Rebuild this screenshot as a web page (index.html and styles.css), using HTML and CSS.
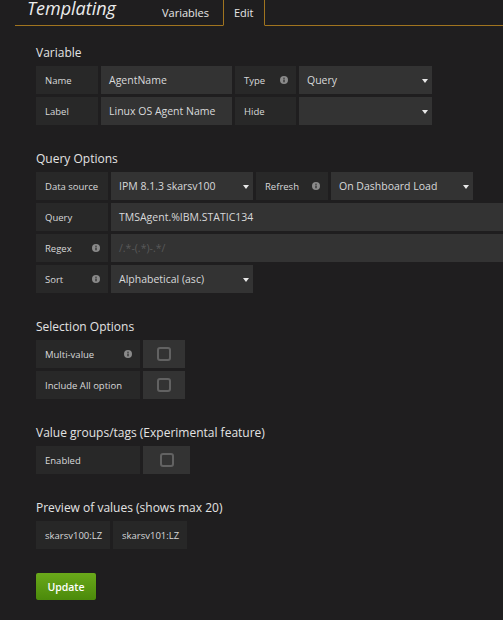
FILE: index.html
```html
<!DOCTYPE html>
<html lang="en">
<head>
<meta charset="UTF-8">
<meta name="viewport" content="width=device-width, initial-scale=1.0">
<title>Templating - Edit</title>
<link rel="stylesheet" href="styles.css">
</head>
<body>

<div class="page-header">
    <h1 class="page-title">Templating</h1>
    <a class="tab">Variables</a>
    <a class="tab active">Edit</a>
    <div class="tab-filler"></div>
</div>

<div class="content">

    <div class="section">
        <h5 class="section-heading">Variable</h5>
        <div class="form-row">
            <span class="form-label w-62">Name</span>
            <span class="form-input w-131">AgentName</span>
            <span class="form-label w-61">Type
                <svg class="info" viewBox="0 0 8 8"><circle cx="4" cy="4" r="4"/><rect x="3.4" y="3.5" width="1.2" height="2.8"/><circle cx="4" cy="2.2" r="0.7"/></svg>
            </span>
            <span class="form-input form-select w-133">Query <span class="caret"></span></span>
        </div>
        <div class="form-row">
            <span class="form-label w-62">Label</span>
            <span class="form-input w-131">Linux OS Agent Name</span>
            <span class="form-label w-61">Hide</span>
            <span class="form-input form-select w-133"><span class="caret"></span></span>
        </div>
    </div>

    <div class="section">
        <h5 class="section-heading">Query Options</h5>
        <div class="form-row">
            <span class="form-label w-72">Data source</span>
            <span class="form-input form-select w-142">IPM 8.1.3 skarsv100 <span class="caret"></span></span>
            <span class="form-label w-72">Refresh
                <svg class="info" viewBox="0 0 8 8"><circle cx="4" cy="4" r="4"/><rect x="3.4" y="3.5" width="1.2" height="2.8"/><circle cx="4" cy="2.2" r="0.7"/></svg>
            </span>
            <span class="form-input form-select w-142">On Dashboard Load <span class="caret"></span></span>
        </div>
        <div class="form-row">
            <span class="form-label w-72">Query</span>
            <span class="form-input w-420">TMSAgent.%IBM.STATIC134</span>
        </div>
        <div class="form-row">
            <span class="form-label w-72">Regex
                <svg class="info" viewBox="0 0 8 8"><circle cx="4" cy="4" r="4"/><rect x="3.4" y="3.5" width="1.2" height="2.8"/><circle cx="4" cy="2.2" r="0.7"/></svg>
            </span>
            <span class="form-input placeholder w-420">/.*-(.*)-.*/</span>
        </div>
        <div class="form-row">
            <span class="form-label w-72">Sort
                <svg class="info" viewBox="0 0 8 8"><circle cx="4" cy="4" r="4"/><rect x="3.4" y="3.5" width="1.2" height="2.8"/><circle cx="4" cy="2.2" r="0.7"/></svg>
            </span>
            <span class="form-input form-select w-142">Alphabetical (asc) <span class="caret"></span></span>
        </div>
    </div>

    <div class="section">
        <h5 class="section-heading">Selection Options</h5>
        <div class="form-row">
            <span class="form-label w-104">Multi-value
                <svg class="info" viewBox="0 0 8 8"><circle cx="4" cy="4" r="4"/><rect x="3.4" y="3.5" width="1.2" height="2.8"/><circle cx="4" cy="2.2" r="0.7"/></svg>
            </span>
            <span class="checkbox-cell w-42"><span class="checkbox"></span></span>
        </div>
        <div class="form-row">
            <span class="form-label w-104">Include All option</span>
            <span class="checkbox-cell w-42"><span class="checkbox"></span></span>
        </div>
    </div>

    <div class="section">
        <h5 class="section-heading">Value groups/tags (Experimental feature)</h5>
        <div class="form-row">
            <span class="form-label w-104">Enabled</span>
            <span class="checkbox-cell w-47"><span class="checkbox"></span></span>
        </div>
    </div>

    <div class="section">
        <h5 class="section-heading">Preview of values (shows max 20)</h5>
        <div class="form-row">
            <span class="tag">skarsv100:LZ</span>
            <span class="tag">skarsv101:LZ</span>
        </div>
    </div>

    <button class="btn-update">Update</button>
</div>

</body>
</html>
```

FILE: styles.css
```css
body {
    margin: 0;
    background-color: #1f1e1f;
    font-family: "Open Sans", "Liberation Sans", sans-serif;
    color: #d8d9da;
    overflow: hidden;
}

/* Cabecalho com abas */
.page-header {
    display: flex;
    margin-left: 15px;
}

.page-title,
.tab,
.tab-filler {
    box-sizing: border-box;
    height: 26px;
    border-bottom: 1px solid #a0741f;
}

.page-title {
    margin: 0;
    width: 133px;
    padding-left: 12px;
    font-size: 18px;
    font-style: italic;
    font-weight: 400;
    line-height: 16px;
    color: #ececec;
}

.tab {
    padding: 0 14px;
    font-size: 11px;
    line-height: 25px;
    color: #e6e6e6;
}

.tab.active {
    padding: 0 10px;
    border-bottom-color: transparent;
    border-left: 1px solid #a0741f;
    border-right: 1px solid #a0741f;
}

.tab-filler {
    flex: 1;
}

/* Conteudo */
.content {
    padding: 17px 0 0 36px;
}

.section {
    margin-bottom: 24px;
}

.section-heading {
    margin: 0 0 3px;
    font-size: 12px;
    font-weight: 400;
    line-height: 20px;
    color: #e3e3e3;
}

.form-row {
    display: flex;
    gap: 3px;
    height: 28px;
    margin-bottom: 3px;
}

.form-label,
.form-input,
.checkbox-cell,
.tag {
    flex-shrink: 0;
    box-sizing: border-box;
    height: 28px;
    display: flex;
    align-items: center;
    white-space: nowrap;
}

.form-label {
    justify-content: space-between;
    padding: 0 8px 0 9px;
    background-color: #282828;
    font-size: 9.5px;
    font-weight: 500;
    color: #d8d9da;
}

.form-input {
    padding: 0 8px;
    background-color: #333333;
    font-size: 10.5px;
    color: #d8d9da;
}

.form-input.placeholder {
    color: #595959;
}

.form-select {
    padding-right: 4px;
}

.caret {
    width: 0;
    height: 0;
    margin: 2px 0 0 auto;
    border-left: 3px solid transparent;
    border-right: 3px solid transparent;
    border-top: 4px solid #e8e8e8;
}

.info {
    width: 8px;
    height: 8px;
    flex-shrink: 0;
}

.info circle:first-child {
    fill: #8a8a8a;
}

.info rect,
.info circle + rect + circle {
    fill: #282828;
}

.checkbox-cell {
    justify-content: center;
    background-color: #333333;
}

.checkbox {
    box-sizing: border-box;
    width: 14px;
    height: 14px;
    border: 2px solid #626262;
    border-radius: 3px;
}

.tag {
    width: 74px;
    padding: 0 9px;
    background-color: #272727;
    font-size: 9.5px;
    font-weight: 500;
    color: #d8d9da;
}

.btn-update {
    width: 60px;
    height: 27px;
    padding: 0;
    border: none;
    border-radius: 2px;
    background: linear-gradient(#6aa91a, #4b8a0b);
    box-shadow: 0 1px 1px rgba(0, 0, 0, 0.6);
    font-family: "Open Sans", "Liberation Sans", sans-serif;
    font-size: 10.5px;
    font-weight: 600;
    color: #ffffff;
}

/* Larguras */
.w-42 { width: 42px; }
.w-47 { width: 47px; }
.w-61 { width: 61px; }
.w-62 { width: 62px; }
.w-72 { width: 72px; }
.w-104 { width: 104px; }
.w-131 { width: 131px; }
.w-133 { width: 133px; }
.w-142 { width: 142px; }
.w-420 { width: 420px; }
```
